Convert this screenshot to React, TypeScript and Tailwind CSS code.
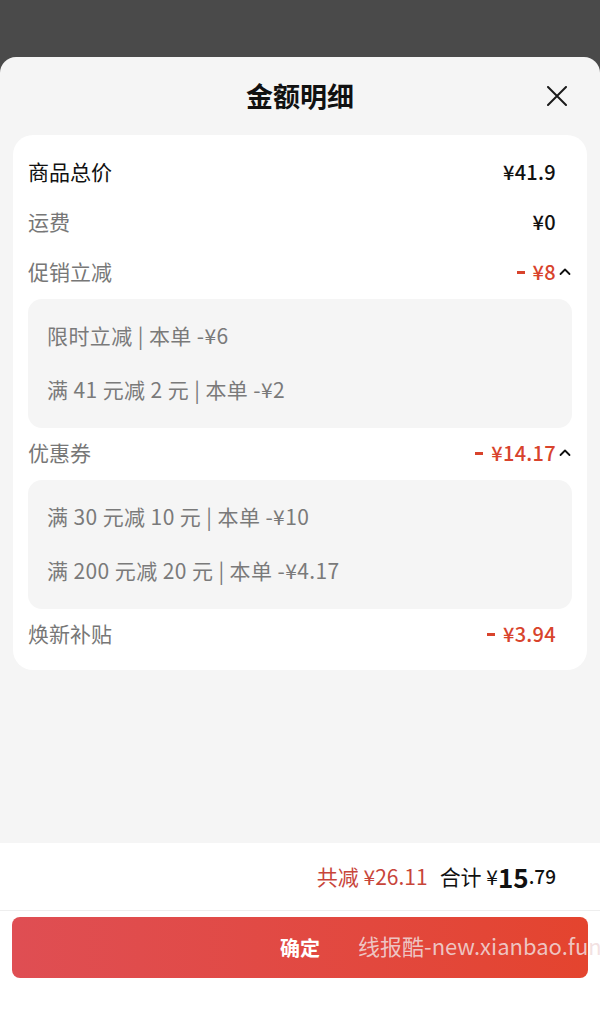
const red = "text-[#d8432c]";

function Chevron() {
  return (
    <svg width="14" height="14" viewBox="0 0 14 14" className="ml-[2px]">
      <path d="M2.5 9 L7 4.5 L11.5 9" fill="none" stroke="#111" strokeWidth="1.8" strokeLinecap="round" strokeLinejoin="round" />
    </svg>
  );
}

interface RowProps {
  label: string;
  value: string;
  dark?: boolean;
  discount?: boolean;
  open?: boolean;
}

function Row({ label, value, dark, discount, open }: RowProps) {
  return (
    <div className="flex items-center h-[50px]">
      <span className={`flex-1 text-[21px] ${dark ? "text-[#111]" : "text-[#777]"}`}>{label}</span>
      {discount && <span className="w-[8px] h-[3px] mr-[8px] mt-[1px] bg-[#d8432c]" />}
      <span className={`text-[20px] font-medium tracking-[0.3px] ${discount ? red : "text-[#111]"}`}>{value}</span>
      <span className="w-[16px] flex items-center justify-end">{open && <Chevron />}</span>
    </div>
  );
}

function Detail({ lines }: { lines: string[] }) {
  return (
    <div className="mt-[2px] bg-[#f5f5f5] rounded-[14px] pt-[10px] pb-[11px] px-[19px]">
      {lines.map((l) => (
        <div key={l} className="h-[54px] flex items-center text-[21px] tracking-[0.4px] text-[#7a7a7a]">
          {l}
        </div>
      ))}
    </div>
  );
}

export default function App() {
  return (
    <div
      className="h-[1031px] flex flex-col bg-[#4a4a4a] overflow-hidden"
      style={{ fontFamily: '"Noto Sans CJK SC", "Noto Sans", sans-serif' }}
    >
      <div className="h-[57px] shrink-0" />
      <div className="flex-1 flex flex-col bg-[#f5f5f5] rounded-t-[16px]">
        <div className="relative h-[78px] flex items-center justify-center">
          <h1 className="text-[27px] font-bold text-[#111]">金额明细</h1>
          <svg width="20" height="20" viewBox="0 0 20 20" className="absolute right-[33px] top-[29px]">
            <path d="M1 1 L19 19 M19 1 L1 19" stroke="#1a1a1a" strokeWidth="2" strokeLinecap="round" />
          </svg>
        </div>

        <div className="mx-[13px] bg-white rounded-[20px] px-[15px] pt-[12px] pb-[11px]">
          <Row label="商品总价" value="¥41.9" dark />
          <Row label="运费" value="¥0" />
          <Row label="促销立减" value="¥8" discount open />
          <Detail lines={["限时立减 | 本单 -¥6", "满 41 元减 2 元 | 本单 -¥2"]} />
          <Row label="优惠券" value="¥14.17" discount open />
          <Detail lines={["满 30 元减 10 元 | 本单 -¥10", "满 200 元减 20 元 | 本单 -¥4.17"]} />
          <Row label="焕新补贴" value="¥3.94" discount />
        </div>

        <div className="flex-1" />

        <div className="bg-white">
          <div className="h-[68px] flex items-center justify-end pr-[44px] border-b border-[#eeeeee]">
            <span className="text-[21px] text-[#c8453a]">共减 ¥26.11</span>
            <span className="ml-[12px] text-[21px] text-[#111]">合计 ¥</span>
            <span className="text-[26px] font-bold text-[#111] leading-none">15</span>
            <span className="text-[19px] font-medium text-[#111]">.79</span>
          </div>
          <div className="relative h-[120px] pt-[6px] overflow-hidden">
            <button className="mx-[12px] w-[576px] h-[61px] rounded-[8px] bg-gradient-to-r from-[#df4e53] to-[#e4442e] text-white text-[20px] font-bold">
              确定
            </button>
            <span className="absolute left-[358px] top-[18px] text-[22px] text-[#f0dcdc]/85 whitespace-nowrap">
              线报酷-new.xianbao.fun
            </span>
          </div>
        </div>
      </div>
    </div>
  );
}
